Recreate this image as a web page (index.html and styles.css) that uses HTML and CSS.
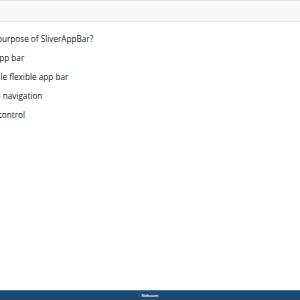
FILE: index.html
```html
<!DOCTYPE html>
<html>
<head>
<meta charset="utf-8">
<link rel="stylesheet" href="styles.css">
</head>
<body>
<div class="page">
  <header class="topbar"></header>
  <main class="quiz">
    <div class="line question"><span class="shift-q">What is the purpose of SliverAppBar?</span></div>
    <div class="line"><span class="shift-a">App bar</span></div>
    <div class="line"><span class="shift-b">Scrollable flexible app bar</span></div>
    <div class="line"><span class="shift-c">Bottom navigation</span></div>
    <div class="line"><span class="shift-d">Scroll control</span></div>
  </main>
  <footer class="footer"><span class="footer-text">Nekoom</span></footer>
</div>
</body>
</html>
```
FILE: styles.css
```css
html, body {
  margin: 0;
  padding: 0;
  width: 300px;
  height: 300px;
  overflow: hidden;
  background: #ffffff;
}
.page {
  display: flex;
  flex-direction: column;
  height: 300px;
  font-family: "Open Sans", "Noto Sans", sans-serif;
  color: #222222;
}
.topbar {
  height: 20px;
  background: #f7f7f7;
  border-top: 1px solid #e6e6e6;
  border-bottom: 1px solid #ececec;
}
.quiz {
  flex: 1;
  display: flex;
  flex-direction: column;
  padding-top: 7px;
  overflow: hidden;
}
.line {
  height: 19px;
  font-size: 8.2px;
  line-height: 19px;
  white-space: nowrap;
}
.shift-q { margin-left: -48px; }
.shift-a { margin-left: -6px; }
.shift-b { margin-left: -30px; }
.shift-c { margin-left: -28px; }
.shift-d { margin-left: -25px; }
.footer {
  height: 10px;
  box-sizing: border-box;
  background: #1d4a73;
  border-top: 1px solid #4c7596;
  display: flex;
  align-items: center;
  justify-content: center;
}
.footer-text {
  color: #e8eef4;
  font-size: 4px;
  line-height: 4px;
  font-weight: 700;
}
```
